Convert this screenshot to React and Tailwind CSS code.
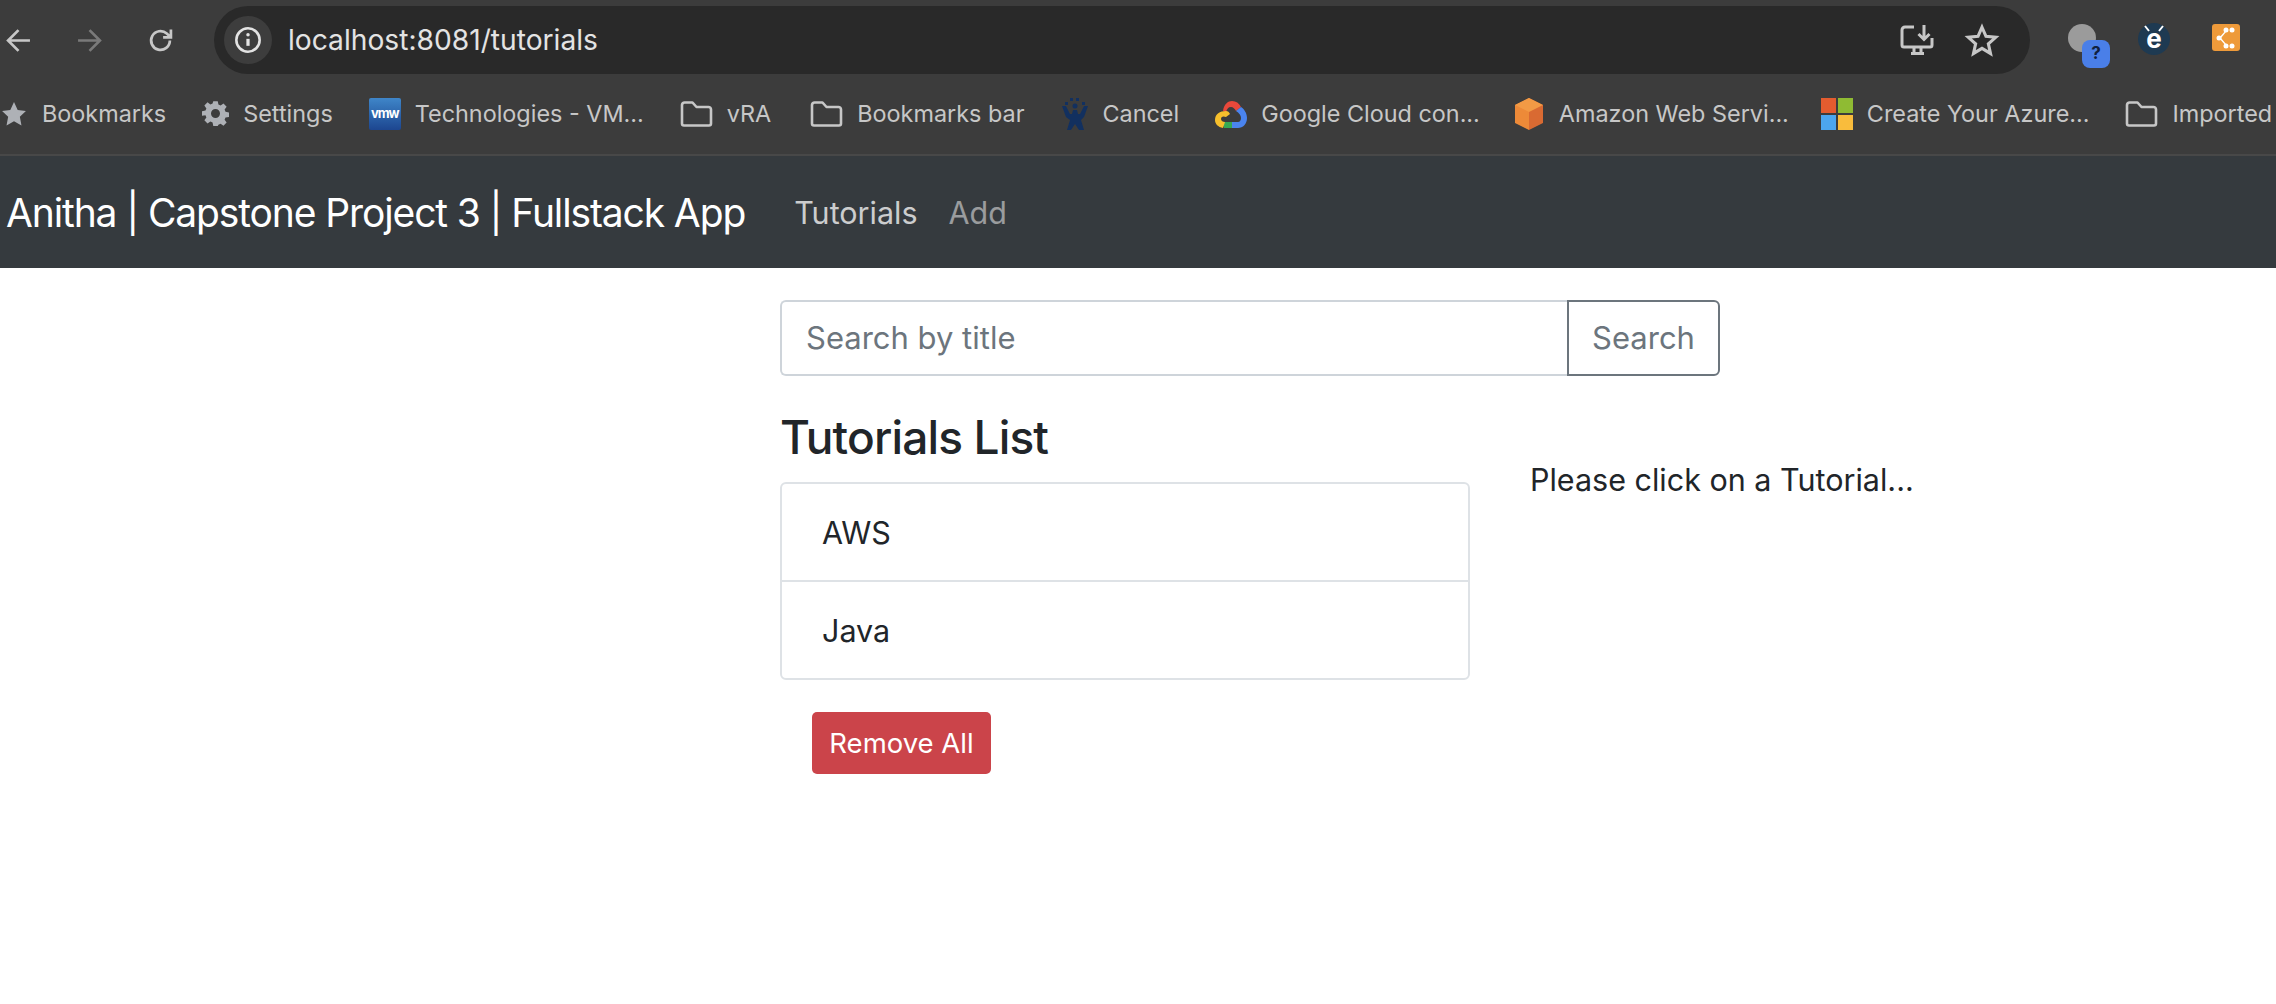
import React from 'react';

const Folder = () => (
  <svg width="33" height="26" viewBox="0 0 33 26" fill="none" stroke="#c7c7c7" strokeWidth="2.6" strokeLinejoin="round">
    <path d="M2 4a2.500 2.500 0 0 1 2.500-2.500h8l4 4.500h12a2.500 2.500 0 0 1 2.500 2.500v14a2 2 0 0 1-2 2H4a2 2 0 0 1-2-2z" />
  </svg>
);

const Gear = () => (
  <svg width="27" height="27" viewBox="0 0 24 24" fill="#aeb1b6">
    <path fillRule="evenodd" d="M10 1h4l.6 3.100 1.900.8 2.600-1.800 2.800 2.800-1.800 2.600.8 1.900 3.100.6v4l-3.100.6-.8 1.900 1.800 2.600-2.800 2.800-2.600-1.800-1.900.8L14 23h-4l-.6-3.100-1.900-.8-2.600 1.800-2.800-2.800 1.800-2.600-.8-1.900L0 14v-4l3.100-.6.8-1.900L2.100 4.900l2.800-2.800 2.600 1.800 1.900-.8zM12 8a4 4 0 1 0 0 8 4 4 0 0 0 0-8z" />
  </svg>
);

const Vmw = () => (
  <div className="w-[32px] h-[32px] rounded-[2px] bg-gradient-to-b from-[#3f86c9] to-[#1d4690] flex items-center justify-center text-white text-[13px] font-bold tracking-[-1px]">
    vmw
  </div>
);

const Jenkins = () => (
  <svg width="26" height="32" viewBox="0 0 26 32" fill="#12305f">
    <rect x="8" y="0" width="3" height="3" />
    <rect x="14" y="0" width="3" height="3" />
    <rect x="3" y="4" width="3" height="3" />
    <rect x="20" y="4" width="3" height="3" />
    <path d="M0 8h4l4 8h2l1-4h4l1 4h2l4-8h4l-4 11-3 3 3 10h-5l-4-6-4 6H5l3-10-4-3z" />
    <circle cx="13" cy="8" r="2.500" />
  </svg>
);

const GoogleCloud = () => (
  <svg width="32" height="28" viewBox="0 0 32 28" fill="none">
    <path d="M8 11C9 4 13 1 17 1c4 0 7 2 9 6l-5 4c-1-2-3-4-5-4-3 0-4 2-5 5z" fill="#e8483b" />
    <path d="M26 7c3 2 6 6 6 11 0 6-4 10-9 10h-6v-6h6c2 0 3-2 3-4 0-3-2-5-5-7z" fill="#4a84ef" />
    <path d="M8 22h9v6H9z" fill="#35a853" />
    <path d="M11 11C5 11 0 14 0 20c0 4 3 7 8 8l2-6c-2 0-4-1-4-3 0-3 3-3 5-2l4-3c-1-2-2-3-4-3z" fill="#f6bf2c" />
  </svg>
);

const Cube = () => (
  <svg width="32" height="32" viewBox="0 0 32 32">
    <path d="M16 0l14 7v18l-14 7z" fill="#d96a32" />
    <path d="M16 0L2 7v18l14 7z" fill="#ed8a38" />
    <path d="M16 0l14 7-14 7L2 7z" fill="#f29a45" />
  </svg>
);

const Windows = () => (
  <div className="grid grid-cols-[15px_15px] grid-rows-[15px_15px] gap-[2px]">
    <div className="bg-[#e35c2f]" />
    <div className="bg-[#8fbb33]" />
    <div className="bg-[#4ca6ee]" />
    <div className="bg-[#f9bc3c]" />
  </div>
);

const bookmarks = [
  {
    icon: (
      <svg width="28" height="26" viewBox="0 0 24 24" fill="#aeb1b6">
        <path d="M12 1l3.400 7.400 7.600.9-5.600 5.300 1.500 8L12 18.600 5.100 22.600l1.500-8L1 9.300l7.600-.9z" />
      </svg>
    ),
    label: 'Bookmarks',
    nudge: '',
  },
  { icon: <Gear />, label: 'Settings', nudge: '' },
  { icon: <Vmw />, label: 'Technologies - VM...', nudge: '' },
  { icon: <Folder />, label: 'vRA', nudge: '' },
  { icon: <Folder />, label: 'Bookmarks bar', nudge: 'ml-[3px]' },
  { icon: <Jenkins />, label: 'Cancel', nudge: 'ml-[2px]' },
  { icon: <GoogleCloud />, label: 'Google Cloud con...', nudge: '' },
  { icon: <Cube />, label: 'Amazon Web Servi...', nudge: '-ml-[3px]' },
  { icon: <Windows />, label: 'Create Your Azure...', nudge: '-ml-[4px]' },
  { icon: <Folder />, label: 'Imported', nudge: '' },
];

export default function App() {
  return (
    <div className="min-h-[1004px] bg-white font-['Inter',sans-serif] overflow-hidden">
      {/* Browser chrome */}
      <div className="h-[156px] bg-[#3c3c3c] border-b-2 border-[#484848] flex flex-col">
        <div className="h-[80px] flex items-start pt-[6px]">
          <div className="w-[214px] h-[68px] flex items-center pl-[6px] gap-[46px] shrink-0">
            <svg width="25" height="25" viewBox="0 0 24 24" fill="none" stroke="#c7c7c7" strokeWidth="2.600" className="shrink-0">
              <path d="M23 12H2M12 2L2 12l10 10" />
            </svg>
            <svg width="25" height="25" viewBox="0 0 24 24" fill="none" stroke="#7a7a7a" strokeWidth="2.600" className="shrink-0">
              <path d="M1 12h21M12 2l10 10-10 10" />
            </svg>
            <svg width="25" height="25" viewBox="0 0 24 24" fill="none" stroke="#c7c7c7" strokeWidth="2.600" className="shrink-0">
              <path d="M21 12a9 9 0 1 1-3-6.700L22 9M22 1.500V9h-7.500" />
            </svg>
          </div>
          <div className="w-[1816px] h-[68px] bg-[#292929] rounded-full flex items-center pl-[10px] pr-[30px] shrink-0">
            <div className="w-[48px] h-[48px] rounded-full bg-[#3d3d3d] flex items-center justify-center">
              <svg width="28" height="28" viewBox="0 0 24 24" fill="none" stroke="#e3e3e3" strokeWidth="2.200">
                <circle cx="12" cy="12" r="10" />
                <path d="M12 11v6" strokeWidth="2.800" />
                <circle cx="12" cy="7.500" r="1.500" fill="#e3e3e3" stroke="none" />
              </svg>
            </div>
            <span className="ml-[16px] text-[28.2px] text-[#e3e3e3]">localhost:8081/tutorials</span>
            <svg width="34" height="32" viewBox="0 0 34 32" fill="none" stroke="#c7c7c7" strokeWidth="3" className="ml-auto">
              <path d="M14 3H5a3 3 0 0 0-3 3v15a2 2 0 0 0 2 2h26a2 2 0 0 0 2-2v-7" />
              <path d="M11 29.500h13M14 23v6M21 23v6" />
              <path d="M24 1v14M18.500 10l5.500 5.500 5.500-5.500" />
            </svg>
            <svg width="36" height="34" viewBox="0 0 24 24" fill="none" stroke="#c7c7c7" strokeWidth="2.200" strokeLinejoin="miter" className="ml-[30px]">
              <path d="M12 3l2.800 6.400 6.900.7-5.200 4.600 1.500 6.800L12 17.900l-6 3.600 1.500-6.800-5.200-4.600 6.900-.7z" />
            </svg>
          </div>
          {/* Extensions */}
          <div className="flex items-start pt-[18px] pl-[38px] shrink-0">
            <div className="relative w-[28px] h-[28px] rounded-full bg-[#9b9b9b]">
              <div className="absolute left-[14px] top-[16px] w-[28px] h-[28px] rounded-[8px] bg-[#4a7fe8] flex items-center justify-center text-[17px] font-bold text-[#10213f]">
                ?
              </div>
            </div>
            <div className="relative ml-[42px] -mt-[1px] w-[32px] h-[32px] rounded-full bg-[#1e3a52] flex items-center justify-center text-white text-[26px] font-bold leading-none">
              e
              <svg width="24" height="10" viewBox="0 0 24 10" fill="none" stroke="#fff" strokeWidth="2" className="absolute left-[4px] top-[2px]">
                <path d="M3 1l4 5M21 1l-4 5" />
              </svg>
            </div>
            <div className="ml-[42px] w-[28px] h-[27px] rounded-[3px] bg-[#ee9a3a] flex items-center justify-center">
              <svg width="20" height="22" viewBox="0 0 20 22" fill="#fff">
                <circle cx="10" cy="3" r="2.500" />
                <circle cx="16" cy="3" r="2.500" />
                <circle cx="3" cy="11" r="2.500" />
                <circle cx="10" cy="19" r="2.500" />
                <circle cx="16" cy="19" r="2.500" />
                <path d="M3 11l7-8v2L5 11l5 6v2z" />
              </svg>
            </div>
          </div>
        </div>
        <div className="flex-1 flex items-center whitespace-nowrap -mt-[6px] gap-[36px]">
          {bookmarks.map((b) => (
            <div key={b.label} className={`flex items-center gap-[14px] shrink-0 ${b.nudge}`}>
              {b.icon}
              <span className="text-[23.4px] text-[#c7c7c7]">{b.label}</span>
            </div>
          ))}
        </div>
      </div>

      {/* Navbar */}
      <nav className="h-[112px] bg-[#353a3e] flex items-center pl-[6px] pt-[2px]">
        <span className="text-[39px] tracking-[-1.12px] text-white">Anitha | Capstone Project 3 | Fullstack App</span>
        <span className="ml-[49px] text-[30.5px] text-white/75">Tutorials</span>
        <span className="ml-[31px] text-[30.5px] text-white/50">Add</span>
      </nav>

      {/* Content */}
      <main className="ml-[780px] w-[940px] pt-[32px]">
        <div className="flex h-[76px]">
          <div className="flex-1 border-2 border-r-0 border-[#ced4da] rounded-l-[6px] flex items-center pl-[24px] text-[31px] text-[#6c757d]">
            Search by title
          </div>
          <button className="w-[153px] border-2 border-[#6c757d] rounded-r-[6px] text-[31px] text-[#6c757d]">
            Search
          </button>
        </div>
        <div className="flex mt-[35px]">
          <div className="w-[690px] shrink-0">
            <h4 className="text-[46px] tracking-[-0.85px] font-medium text-[#212529] leading-[53px]">Tutorials List</h4>
            <ul className="mt-[18px] border-2 border-[#dee2e6] rounded-[6px] text-[30.5px] text-[#212529]">
              <li className="h-[98px] flex items-center pl-[40px] pt-[2px] border-b-2 border-[#dee2e6]">AWS</li>
              <li className="h-[96px] flex items-center pl-[40px] pt-[2px]">Java</li>
            </ul>
            <button className="ml-[32px] mt-[32px] w-[179px] h-[62px] pt-[1px] rounded-[5px] bg-[#cb444a] text-white text-[27.5px]">
              Remove All
            </button>
          </div>
          <p className="ml-[60px] mt-[46px] whitespace-nowrap text-[30.5px] text-[#212529]">Please click on a Tutorial...</p>
        </div>
      </main>
    </div>
  );
}
